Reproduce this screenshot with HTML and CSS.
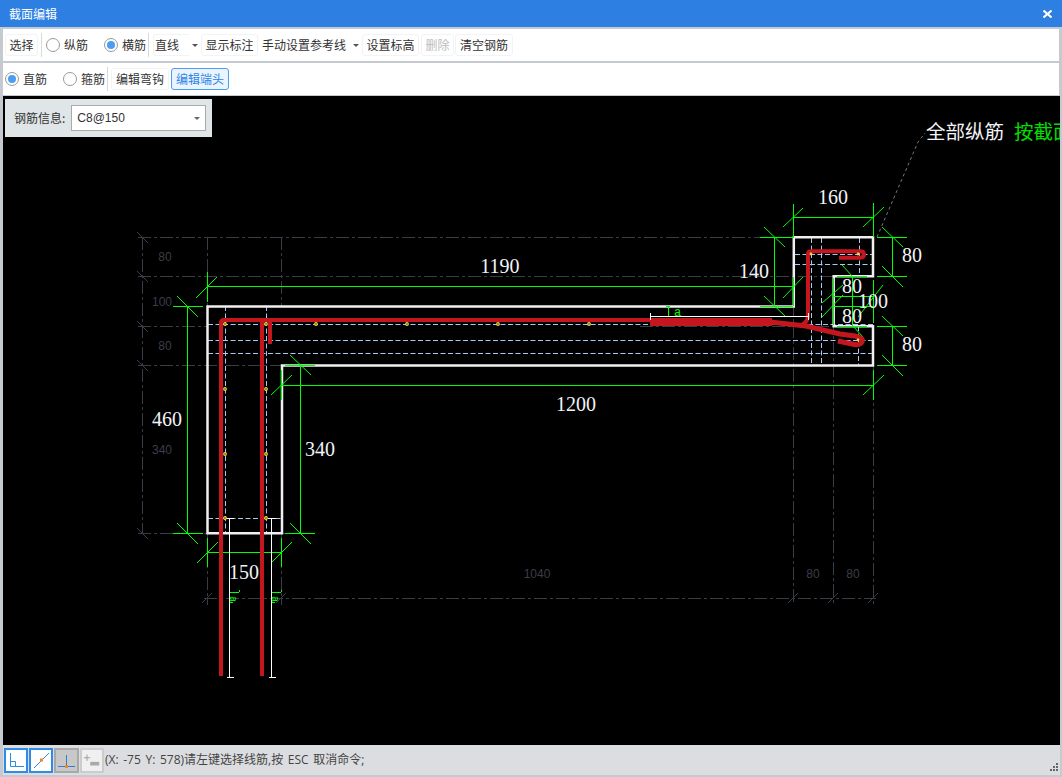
FILE: index.html
```html
<!DOCTYPE html>
<html lang="zh">
<head>
<meta charset="utf-8">
<title>截面编辑</title>
<link rel="stylesheet" href="styles.css">
</head>
<body>
<div class="window">
  <header class="titlebar">
    <span>截面编辑</span>
    <svg class="close" width="9" height="8" viewBox="0 0 9 8"><path d="M.5.500 8.500 7.500M8.500.500.500 7.500" stroke="#fff" stroke-width="2"/></svg>
  </header>
  <div class="toolbar first">
    <button class="btn b-select">选择</button>
    <i class="sep s1"></i>
    <label class="radio r-zong"><i class="dot"></i>纵筋</label>
    <label class="radio r-heng"><i class="dot on"></i>横筋</label>
    <i class="sep s2"></i>
    <div class="combo"><span>直线</span></div><i class="caret c1"></i>
    <button class="btn b-show">显示标注</button>
    <span class="plain">手动设置参考线</span><i class="caret c2"></i>
    <button class="btn b-level">设置标高</button>
    <button class="btn b-del" disabled>删除</button>
    <button class="btn b-clear">清空钢筋</button>
  </div>
  <div class="toolbar second">
    <label class="radio r-zhi"><i class="dot on"></i>直筋</label>
    <label class="radio r-gu"><i class="dot"></i>箍筋</label>
    <i class="sep s3"></i>
    <button class="btn b-hook">编辑弯钩</button>
    <button class="btn active">编辑端头</button>
  </div>
  <main class="canvas">
    <div class="info-panel">
      <span>钢筋信息:</span>
      <div class="info-select"><span>C8@150</span><i class="caret"></i></div>
    </div>
    <svg class="drawing" width="1057" height="649" viewBox="3 96 1057 649">
      <!-- grey grid -->
      <g class="grid">
        <path d="M138 237.500H793M138 276.500H833M138 326.500H208M640 326.500H833M138 365.500H282M138 533.500H208M282 533.500H300"/>
        <path d="M142.500 237V533M207.500 237V306M207.500 533V605M281.500 237V306M281.500 533V605M793.500 237V605M833.500 276V605M873.500 365V605M204 598.500H876"/>
      </g>
      <g class="gridtick">
        <path d="M137 232 148 243M137 271 148 282M137 321 148 332M137 360 148 371M137 528 148 539"/>
        <path d="M202 603 212 593M276 603 286 593M788 603 798 593M828 603 838 593M868 603 878 593"/>
      </g>
      <!-- inner bar lines -->
      <g class="inner">
        <path d="M208 324.500H873M208 340.500H873M208 353.500H873M795 254.500H873M795 264.500H873"/>
        <path d="M225.500 306V533M266.500 306V533M811.500 238V365M821.500 238V365M859.500 238V276M858.500 326V365"/>
        <path d="M208 518.500H282"/>
      </g>
      <!-- leader -->
      <path class="leader" d="M877 237 918 142 925 133"/>
      <!-- section outline -->
      <path class="outline" d="M207.500 306.500H793.800V237.300H873V276.200H833.700V326.300H873V365.500H282V533.200H207.500Z"/>
      <!-- dimensions -->
      <g class="dim">
        <path d="M793.500 204V238M873.500 203V237M793 217.500H873"/>
        <path d="M877 237.500H907M877 276.500H907M892.500 237V276M877 326.500H907M877 365.500H907M892.500 326V365"/>
        <path d="M760 237.500H793M760 306.500H793M774.500 237V306"/>
        <path d="M207.500 272V302M208 286.500H793M793.500 277V306"/>
        <path d="M873.500 370V400M282 385.500H873M281.500 370V400"/>
        <path d="M173 306.500H203M173 533.500H203M187.500 306V533"/>
        <path d="M285 365.500H315M285 533.500H315M300.500 365V533"/>
        <path d="M207.500 538V567M281.500 538V567M208 552.500H282"/>
        <path d="M837 276.500H867M837 326.500H867M833.500 278V325M873.500 280V323M833 296.500H873M833 306.500H873M852.500 276V326"/>
        <path d="M668.500 306V316M666 306.500H670"/>
        <path d="M229.500 590V603M229 592.500H239M239.500 590V592M229 602.500H233M271.500 590V603M271 592.500H281M281.500 590V592M271 602.500H275"/>
      </g>
      <g class="dim tick">
        <path d="M783 227 803 208M863 227 884 207M882 227 903 247M882 266 903 287M882 316 903 336M882 355 903 376"/>
        <path d="M764 227 785 247M764 296 785 316M783 298 803 277M196 298 217 277M863 395 884 375M271 395 292 375"/>
        <path d="M177 296 198 317M177 523 198 544M290 355 311 375M290 523 311 544M197 563 218 542M272 562 292 542"/>
        <path d="M822 317 843 295M822 303 843 285M858 317 883 285M842 265 853 277M852 325 863 337"/>
      </g>
      <!-- rebar -->
      <g class="bar">
        <path d="M221 676V323Q221 320 224 320H650"/>
        <path d="M262 676V323Q262 320 265 320H272M270 320V344"/>
        <path d="M808 318V254Q808 251.300 811 251.300H860Q864 251.300 864 254.500 864 257.700 860 257.700H839"/>
        <path d="M808 316Q808 321 802 325"/>
      </g>
      <path class="bar slope" d="M770 322 806 326 840 334 855 336Q864 338 862 342 860 346 852 344L838 341"/>
      <path class="bar thick" d="M650 322H772"/>
      <!-- white bar guides -->
      <g class="guide">
        <path d="M650 316.500H808M808.500 313V320M650.500 313V320"/>
        <path d="M229.500 518V677M271.500 518V677M226 518.500H234M268 518.500H276M227 677.500H234M269 677.500H276"/>
      </g>
      <!-- bar points -->
      <g class="pt">
        <circle cx="225" cy="324" r="1.300"/><circle cx="266" cy="324" r="1.300"/><circle cx="316" cy="324" r="1.300"/><circle cx="407" cy="324" r="1.300"/><circle cx="498" cy="324" r="1.300"/><circle cx="589" cy="324" r="1.300"/>
        <circle cx="225" cy="389" r="1.300"/><circle cx="266" cy="389" r="1.300"/><circle cx="225" cy="454" r="1.300"/><circle cx="266" cy="454" r="1.300"/><circle cx="225" cy="518" r="1.300"/><circle cx="266" cy="518" r="1.300"/>
        <circle cx="811" cy="254" r=".8"/><circle cx="858" cy="254" r=".8"/><circle cx="858" cy="340" r=".8"/>
      </g>
      <!-- labels -->
      <g class="faint">
        <text x="165" y="261">80</text><text x="162" y="306">100</text><text x="165" y="350">80</text><text x="162" y="454">340</text>
        <text x="537" y="578">1040</text><text x="813" y="578">80</text><text x="853" y="578">80</text>
      </g>
      <g class="label">
        <text x="500" y="273">1190</text><text x="833" y="204">160</text><text x="754" y="278">140</text>
        <text x="912" y="262">80</text><text x="912" y="351">80</text>
        <text x="852" y="293">80</text><text x="852" y="323">80</text><text x="873" y="308">100</text>
        <text x="576" y="411">1200</text><text x="167" y="426">460</text><text x="320" y="456">340</text><text x="244" y="579">150</text>
      </g>
      <text class="tip" x="926" y="139">全部纵筋<tspan class="tip-green" x="1014">按截面</tspan></text>
      <text class="la" x="674" y="316">a</text>
      <text class="la small" transform="translate(230 596) rotate(90)" x="0" y="0">a</text>
      <text class="la small" transform="translate(272 596) rotate(90)" x="0" y="0">a</text>
    </svg>
  </main>
  <footer class="status">
    <div class="snap on"><svg width="20" height="21" viewBox="0 0 20 21"><path d="M4.500 3V16.500H18M4.500 11.500H9.500V16.500" fill="none" stroke="#2e8be8"/></svg></div>
    <div class="snap on"><svg width="20" height="21" viewBox="0 0 20 21"><path d="M3 18 18 3" stroke="#2e8be8"/><rect x="9" y="8.500" width="3" height="3" fill="#f08a24"/></svg></div>
    <div class="snap pressed"><svg width="21" height="21" viewBox="0 0 21 21"><path d="M2 16.500H19M10.500 5V16" stroke="#2e7fd8"/><rect x="9" y="15" width="3" height="3" fill="#f08a24"/></svg></div>
    <div class="snap"><svg width="22" height="21" viewBox="0 0 22 21"><path d="M2 7.500H9M5.500 4V11" stroke="#9a9a9a"/><rect x="9" y="12" width="10" height="4" fill="#aaa"/></svg></div>
    <span class="status-text">(X: -75 Y: 578)请左键选择线筋,按 ESC 取消命令;</span>
    <svg class="grip" width="9" height="9" viewBox="0 0 9 9"><path d="M7 0h2v2H7zM4 3h2v2H4zM7 3h2v2H7zM1 6h2v2H1zM4 6h2v2H4zM7 6h2v2H7z" fill="#666"/></svg>
  </footer>
</div>
</body>
</html>
```
FILE: styles.css
```css
* { box-sizing: border-box; }
html, body { margin: 0; padding: 0; }
body { width: 1062px; height: 777px; overflow: hidden; background: #c5cad0; font: 12px/16px "Noto Sans CJK SC", "Liberation Sans", sans-serif; color: #333; }
.window { display: flex; flex-direction: column; height: 777px; }
.titlebar { height: 27px; flex: none; background: #2e7fe2; color: #fff; display: flex; align-items: center; justify-content: space-between; padding: 0 10px 0 9px; }
.toolbar { display: flex; align-items: center; background: #fff; flex: none; height: 32px; margin: 2px 3px 0 3px; white-space: nowrap; }
.btn { font: inherit; color: inherit; background: #fff; border: 1px solid #f3f3f3; border-radius: 3px; height: 22px; padding: 0; flex: none; white-space: nowrap; }
.b-select { margin-left: 2px; width: 33px; }
.sep { width: 1px; height: 24px; background: #d8d8d8; flex: none; }
.s1 { margin-left: 3px; }
.radio { display: flex; align-items: center; gap: 4px; flex: none; }
.dot { width: 14px; height: 14px; border: 1px solid #999; border-radius: 50%; background: #fff; position: relative; flex: none; }
.dot.on::after { content: ""; position: absolute; left: 2px; top: 2px; width: 8px; height: 8px; border-radius: 50%; background: #4a9df0; }
.r-zong { margin-left: 4px; }
.r-heng { margin-left: 16px; }
.s2 { margin-left: 2px; }
.combo { width: 36px; height: 22px; margin-left: 4px; border: 1px solid #f3f3f3; border-right: 0; border-radius: 3px 0 0 3px; padding-left: 1px; display: flex; align-items: center; flex: none; }
.caret { width: 0; height: 0; border: 3px solid transparent; border-top: 3px solid #555; border-bottom: 0; flex: none; }
.c1 { margin-left: 3px; }
.b-show { margin-left: 3px; width: 57px; }
.plain { margin-left: 4px; flex: none; }
.c2 { margin-left: 7px; }
.b-level { margin-left: 3px; width: 57px; }
.b-del { margin-left: 2px; width: 33px; color: #bbb; }
.b-clear { margin-left: 1px; width: 58px; }
.r-zhi { margin-left: 2px; }
.r-gu { margin-left: 16px; }
.s3 { margin-left: 2px; }
.b-hook { margin-left: 3px; width: 58px; }
.btn.active { margin-left: 2px; width: 58px; color: #2a85e8; background: #eaf4ff; border-color: #4a9df0; }
.canvas { position: relative; flex: none; height: 649px; margin: 1px 2px 0 3px; background: #000; overflow: hidden; }
.drawing { display: block; }
.info-panel { position: absolute; left: 2px; top: 3px; width: 207px; height: 38px; background: #e0e5e8; display: flex; align-items: center; padding-left: 9px; gap: 6px; }
.info-select { width: 135px; height: 26px; border: 1px solid #aaa; background: #fff; display: flex; align-items: center; justify-content: space-between; padding: 0 5px; font-family: "Liberation Sans", sans-serif; font-size: 12px; }
.info-select .caret { border-top-color: #666; }
.status { flex: none; height: 30px; margin: 0 2px 0 3px; background: #dcdde0; display: flex; align-items: center; padding-left: 1px; gap: 1px; position: relative; }
.snap { width: 24px; height: 25px; border: 2px solid #2e8be8; background: #fff; display: flex; align-items: center; justify-content: center; flex: none; }
.snap.pressed { border-color: #a8a8a8; background: #c8c8c8; width: 25px; }
.snap:not(.on):not(.pressed) { border-color: #ccc; background: #f0f0f0; }
.status-text { font-family: "Open Sans", "Noto Sans CJK SC", sans-serif; word-spacing: 1.500px; color: #444; white-space: nowrap; }
.grip { position: absolute; right: 2px; bottom: 3px; }
.grid path { fill: none; stroke: #383c47; stroke-width: 1; stroke-dasharray: 13 3 3 3; }
.gridtick path { fill: none; stroke: #383c47; stroke-width: 1; }
.inner path { fill: none; stroke: #a9c9f2; stroke-width: 1; stroke-dasharray: 5 2.500; }
.leader { fill: none; stroke: #777; stroke-width: 1; stroke-dasharray: 3 3; }
.outline { fill: none; stroke: #f0f0f0; stroke-width: 2.500; }
.dim path { fill: none; stroke: #00ff00; stroke-width: 1; }
.bar path { fill: none; stroke: #c4161e; stroke-width: 4; }
.bar.slope { fill: none; stroke: #c4161e; stroke-width: 5; }
.bar.thick { fill: none; stroke: #c4161e; stroke-width: 8; }
.guide path { fill: none; stroke: #fff; stroke-width: 1; }
.pt circle { fill: #111; stroke: #ffd83c; stroke-width: 1.200; }
.faint text { fill: #3a3e49; font: 12px "Liberation Sans", sans-serif; text-anchor: middle; }
.label text { fill: #f2f4f8; font: 20px "Liberation Serif", serif; text-anchor: middle; }
.tip { fill: #f2f4f8; font: 19.500px "Noto Sans CJK SC", sans-serif; }
.tip-green { fill: #00e000; }
.la { fill: #00ff00; font: 12px "Liberation Mono", monospace; }
.la.small { font-size: 10px; }
```
